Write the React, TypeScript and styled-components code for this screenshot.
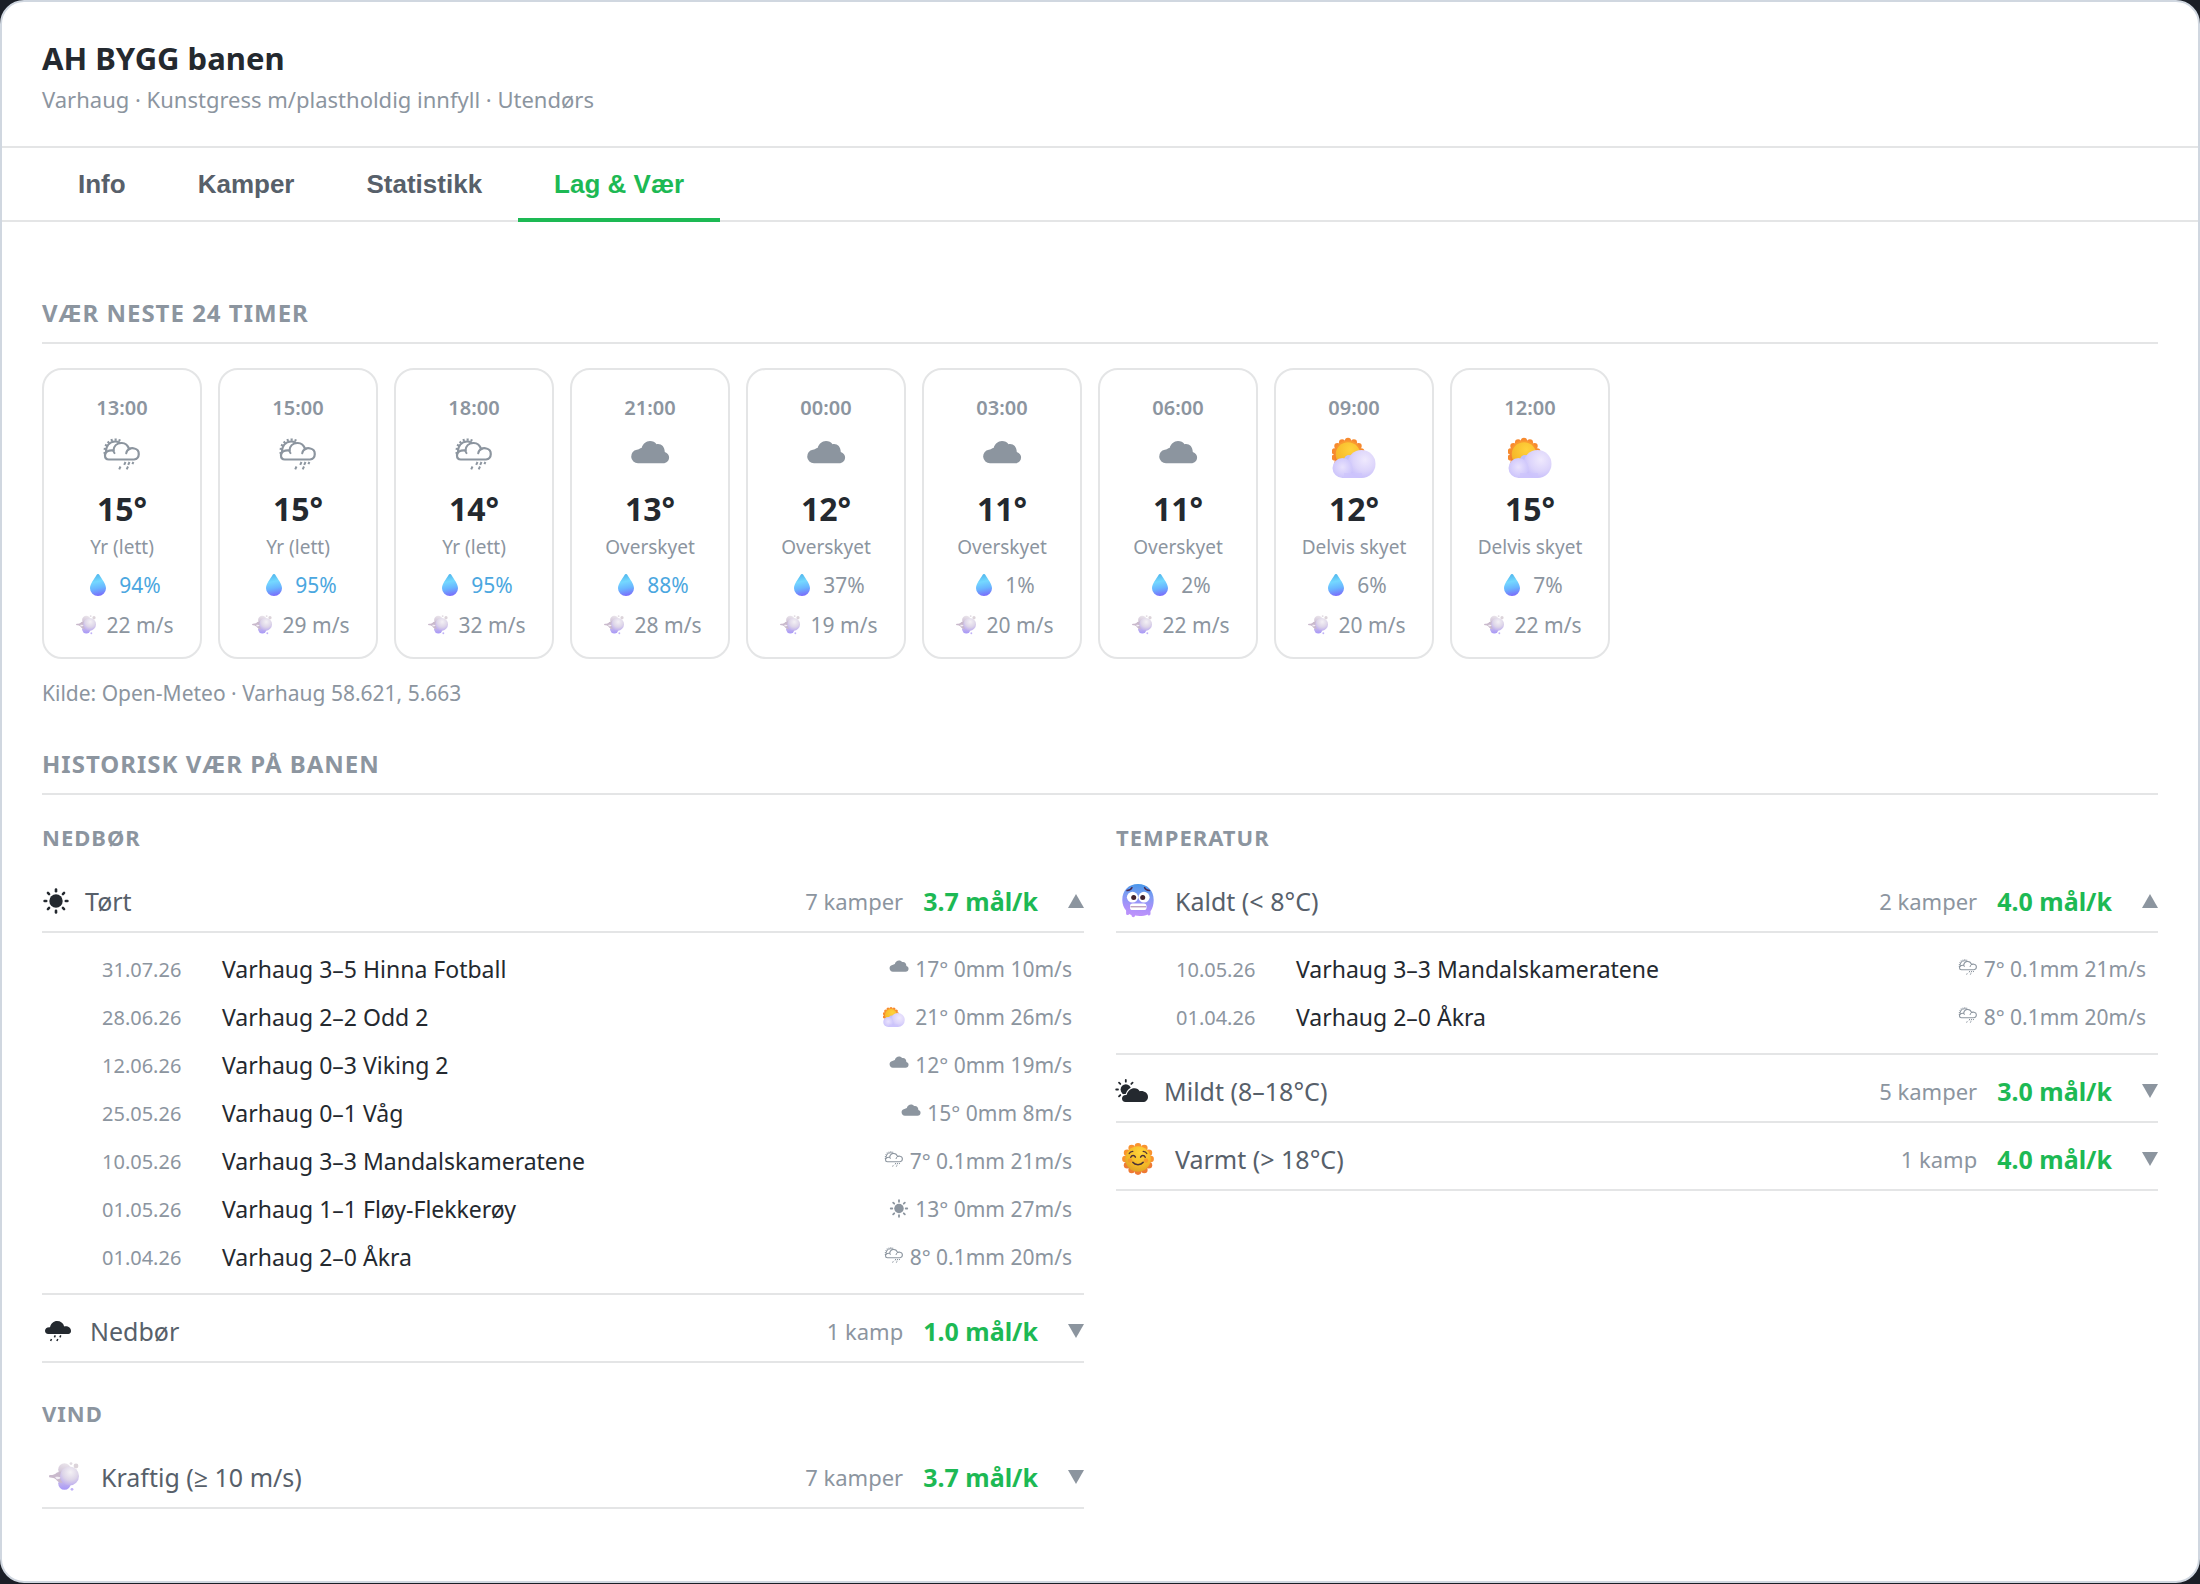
import React, { useState } from "react";
import styled, { createGlobalStyle } from "styled-components";

const color = {
  page: "#1b1f27",
  surface: "#ffffff",
  frame: "#d0d7e0",
  line: "#e4e5e6",
  text: "#24292f",
  body: "#57606a",
  muted: "#8c959f",
  accent: "#1db954",
  rain: "#4ba7e0",
};

const GlobalStyle = createGlobalStyle`
  *, *::before, *::after { box-sizing: border-box; }
  body {
    margin: 0;
    background: ${color.page};
    color: ${color.text};
    font-family: "Noto Sans", "Open Sans", sans-serif;
  }
  h1, h2, h3, p, ul { margin: 0; padding: 0; }
  ul { list-style: none; }
`;

const Card = styled.div`
  background: ${color.surface};
  border: 2px solid ${color.frame};
  border-radius: 24px;
  overflow: hidden;
`;

const Header = styled.header`
  padding: 34px 40px 31px;
  border-bottom: 2px solid ${color.line};
`;

const Title = styled.h1`
  font-size: 31px;
  line-height: 44px;
  font-weight: 700;
`;

const Subtitle = styled.p`
  && { margin-top: 3px; }
  font-size: 22px;
  line-height: 32px;
  color: ${color.muted};
`;

const Tabs = styled.nav`
  display: flex;
  padding: 0 40px;
  border-bottom: 2px solid ${color.line};
`;

const Tab = styled.button<{ $active: boolean }>`
  height: 74px;
  margin-bottom: -2px;
  padding: 2px 36px 0;
  border: 0;
  border-bottom: 4px solid ${(p) => (p.$active ? color.accent : "transparent")};
  background: none;
  color: ${(p) => (p.$active ? color.accent : color.body)};
  font-family: "Liberation Sans", Arial, sans-serif;
  font-size: 26px;
  font-weight: 600;
  cursor: pointer;
`;

const Main = styled.main`
  padding: 74px 40px 72px;
`;

const SectionTitle = styled.h2`
  padding-bottom: 12px;
  border-bottom: 2px solid ${color.line};
  font-size: 24px;
  line-height: 34px;
  font-weight: 700;
  letter-spacing: 1px;
  color: ${color.muted};
`;

const History = styled.section`
  margin-top: 38px;
`;

const HourList = styled.ul`
  display: flex;
  flex-wrap: wrap;
  gap: 16px;
  && { margin-top: 24px; }
`;

const HourCard = styled.li`
  display: flex;
  flex-direction: column;
  align-items: center;
  width: 160px;
  padding: 22px 0 16px;
  border: 2px solid ${color.line};
  border-radius: 20px;
  color: ${color.muted};
`;

const Time = styled.time`
  font-size: 20px;
  line-height: 32px;
  font-weight: 600;
  margin-bottom: 12px;
`;

const Temp = styled.div`
  margin-top: 9px;
  font-size: 32px;
  line-height: 40px;
  font-weight: 700;
  color: ${color.text};
`;

const Condition = styled.div`
  margin-top: 5px;
  font-size: 19px;
  line-height: 27px;
`;

const Reading = styled.div<{ $wet?: boolean }>`
  display: flex;
  align-items: center;
  gap: 6px;
  margin-top: 8px;
  font-size: 21px;
  line-height: 32px;
  color: ${(p) => (p.$wet ? color.rain : color.muted)};
`;

const ReadingIcon = styled.span`
  display: flex;
  justify-content: center;
  width: 30px;
`;

const Source = styled.p`
  && { margin-top: 18px; }
  font-size: 21px;
  line-height: 32px;
  color: ${color.muted};
`;

const Columns = styled.div`
  display: grid;
  grid-template-columns: 1fr 1fr;
  gap: 32px;
  align-items: start;
  padding-top: 26px;
`;

const GroupStack = styled.div`
  display: flex;
  flex-direction: column;
  gap: 34px;
`;

const GroupTitle = styled.h3`
  && { margin-bottom: 12px; }
  font-size: 22px;
  line-height: 32px;
  font-weight: 700;
  letter-spacing: 1px;
  color: ${color.muted};
`;

const GroupRow = styled.button`
  display: flex;
  align-items: center;
  width: 100%;
  padding: 18px 0 12px;
  border: 0;
  border-bottom: 2px solid ${color.line};
  background: none;
  color: ${color.text};
  font-family: inherit;
  font-size: 25px;
  line-height: 36px;
  text-align: left;
  cursor: pointer;
`;

const GroupIcon = styled.span<{ $width: number }>`
  display: flex;
  align-items: center;
  justify-content: center;
  width: ${(p) => p.$width}px;
  height: 36px;
  margin-right: 16px;
`;

const GroupLabel = styled.span`
  flex: 1;
  color: ${color.body};
`;

const GroupCount = styled.span`
  margin-right: 20px;
  font-size: 22px;
  color: ${color.muted};
`;

const GroupRate = styled.span`
  margin-right: 30px;
  font-size: 25px;
  font-weight: 700;
  color: ${color.accent};
`;

const MatchList = styled.ul`
  && { padding: 12px 12px 12px 60px; }
  border-bottom: 2px solid ${color.line};
`;

const Match = styled.li`
  display: grid;
  grid-template-columns: 120px 1fr auto;
  align-items: center;
  height: 48px;
  font-size: 23px;
`;

const MatchDate = styled.time`
  font-size: 20px;
  color: ${color.muted};
`;

const MatchWeather = styled.span<{ $wide: boolean }>`
  display: flex;
  align-items: center;
  gap: ${(p) => (p.$wide ? 10 : 5)}px;
  font-size: 21px;
  color: ${color.muted};
`;

const Defs = styled.svg`
  display: block;
  width: 0;
  height: 0;
  position: absolute;
`;

type Sky = "showers" | "cloud" | "partly" | "sun";

const ring = (n: number, cx: number, cy: number, r: number) =>
  Array.from({ length: n }, (_, i) => {
    const a = (i / n) * Math.PI * 2 - Math.PI / 2;
    return { x: cx + Math.cos(a) * r, y: cy + Math.sin(a) * r, deg: (a * 180) / Math.PI };
  });

const Gradients = () => (
  <Defs aria-hidden="true">
    <defs>
      <linearGradient id="rayFill" x1="0" y1="0" x2="0" y2="1">
        <stop offset="0" stopColor="#fb9d2f" />
        <stop offset="1" stopColor="#ee6f2d" />
      </linearGradient>
      <radialGradient id="sunFill" cx="0.6" cy="0.3" r="0.8">
        <stop offset="0" stopColor="#ffd23c" />
        <stop offset="0.7" stopColor="#f7bb2b" />
        <stop offset="1" stopColor="#eea52a" />
      </radialGradient>
      <radialGradient id="faceSun" cx="0.6" cy="0.25" r="0.85">
        <stop offset="0" stopColor="#ffd43a" />
        <stop offset="0.6" stopColor="#f3b927" />
        <stop offset="1" stopColor="#d99a26" />
      </radialGradient>
      <radialGradient id="puffBig" cx="0.62" cy="0.35" r="0.75">
        <stop offset="0" stopColor="#efe9fd" />
        <stop offset="0.55" stopColor="#dcd4fb" />
        <stop offset="1" stopColor="#c1b8fa" />
      </radialGradient>
      <radialGradient id="puffSmall" cx="0.5" cy="0.45" r="0.6">
        <stop offset="0" stopColor="#e9e2fd" />
        <stop offset="1" stopColor="#c9c1fb" />
      </radialGradient>
      <linearGradient id="dropFill" x1="0.35" y1="0" x2="0.5" y2="1">
        <stop offset="0" stopColor="#4fb4ec" />
        <stop offset="0.35" stopColor="#74d8ff" />
        <stop offset="0.65" stopColor="#69b6ff" />
        <stop offset="1" stopColor="#7a6bfb" />
      </linearGradient>
      <linearGradient id="windTop" x1="0.7" y1="0" x2="0.4" y2="1">
        <stop offset="0" stopColor="#ebe6ec" />
        <stop offset="1" stopColor="#cbbcd2" />
      </linearGradient>
      <radialGradient id="windBody" cx="0.55" cy="0.3" r="0.75">
        <stop offset="0" stopColor="#f4f1f5" />
        <stop offset="0.55" stopColor="#ddd5e8" />
        <stop offset="1" stopColor="#b9a8f0" />
      </radialGradient>
      <linearGradient id="windLow" x1="0.5" y1="0" x2="0.5" y2="1">
        <stop offset="0" stopColor="#d3c7e4" />
        <stop offset="1" stopColor="#a797f8" />
      </linearGradient>
      <linearGradient id="coldFill" x1="0.55" y1="0" x2="0.45" y2="1">
        <stop offset="0" stopColor="#4796ea" />
        <stop offset="0.35" stopColor="#7f9cf3" />
        <stop offset="0.7" stopColor="#aa90fa" />
        <stop offset="1" stopColor="#c193fb" />
      </linearGradient>
    </defs>
  </Defs>
);

const SkyIcon = ({ sky, size }: { sky: Sky; size: number }) => (
  <svg width={size} height={size} viewBox="0 0 44 44" fill="currentColor" aria-hidden="true">
    {sky === "cloud" && (
      <path d="M10 27.3a6.8 6.8 0 0 1-1.2-13.5c1.8-.3 3-1.5 4.8-1.8C14.8 8 18 5 22 5c2.8 0 5 1.1 6.5 3.2 4.7-.8 8 2 8.3 7.8 2.8 1.2 4.300 3 4.300 5.300 0 3.600-2.400 6-6.100 6z" />
    )}
    {sky === "showers" && (
      <g fill="none" stroke="currentColor">
        <path strokeWidth="2.200" strokeLinejoin="round" d="M8.800 23.500H34a5.600 5.600 0 0 0 .4-11c-2-.6-4-.2-5.400.4C27.600 8.600 24.600 6.800 21.200 7c-4.600.2-7.500 3.400-7.700 7.600-5-.6-8.500 1-8.500 5 0 2.500 1.300 3.900 3.800 3.900z" />
        <path strokeWidth="2" strokeLinecap="round" d="M30 12.700c-2.200.7-3.500 2.200-3.800 4.600M6 16.500C5.600 10 9.500 5.600 15 5.500c1.700 0 3.200.4 4.500 1.200M13.500 14.500c.1 1.100.4 1.900 1 2.600" />
        <path strokeWidth="2.400" strokeDasharray="2 1.900" d="M4.900 18C3.600 9.500 8.600 3.800 15.200 3.600c2.600 0 5 .8 6.800 2.200" />
        <path strokeWidth="2" d="M25.500 26l-1.300 2.800M29.500 26l-1.300 2.800M33.400 26l-1 2.200M20.500 30.500l-1.300 2.800M28 30.500l-1.300 2.800" />
      </g>
    )}
    {sky === "sun" && (
      <g stroke="currentColor" strokeWidth="3.600" strokeLinecap="round">
        <circle cx="22" cy="21" r="9.500" stroke="none" />
        {ring(8, 22, 21, 1).map((p, i) => (
          <line key={i} x1="13.500" x2="16.500" y1="0" y2="0" transform={`translate(22 21) rotate(${p.deg})`} />
        ))}
      </g>
    )}
    {sky === "partly" && (
      <g>
        <g fill="url(#rayFill)">
          {ring(14, 16, 18.5, 13.6).map((p, i) => (
            <circle key={i} cx={p.x} cy={p.y} r="3.100" fill="#f78a2e" />
          ))}
          <circle cx="16" cy="18.500" r="14" />
        </g>
        <circle cx="16" cy="18.500" r="12.300" fill="url(#sunFill)" />
        <circle cx="17" cy="24" r="5" fill="#bfc0fb" />
        <path d="M10 31h20v11H10z" fill="#cbc4fb" />
        <circle cx="29.500" cy="28" r="14" fill="url(#puffBig)" />
        <circle cx="10.500" cy="32" r="10" fill="url(#puffSmall)" />
        <path d="M12 37h18v5H12z" fill="#cdc5fc" opacity="0.7" />
      </g>
    )}
  </svg>
);

const DropIcon = () => (
  <svg width="16" height="22" viewBox="0 0 16 22" aria-hidden="true">
    <path d="M8 0c.7 0 1.200.5 1.600 1.200C11.800 5 16 10 16 14.300A8 7.700 0 0 1 0 14.300C0 10 4.200 5 6.400 1.200 6.800.5 7.300 0 8 0z" fill="url(#dropFill)" />
  </svg>
);

const WindIcon = ({ size }: { size: number }) => (
  <svg width={size} height={size} viewBox="0 0 30 30" aria-hidden="true">
    <circle cx="15.500" cy="7.500" r="6.300" fill="url(#windTop)" />
    <circle cx="15.500" cy="21.500" r="6.300" fill="url(#windLow)" />
    <path d="M0 14.300c0-.8.6-1.200 1.500-1.200 2.500 0 4.500-.4 6.500-2.600l6-1.500v11.500c-3 .5-5.500-.5-7-3-1.700-1.600-3.500-1.900-5.500-2-.9 0-1.500-.4-1.500-1.200z" fill="#c9b9cc" />
    <path d="M6 15c2.500-.5 4-.5 6 .5-1 1.500-3 2-4.500 1.500z" fill="#f2eef4" />
    <circle cx="20.500" cy="14" r="9.500" fill="url(#windBody)" />
    <circle cx="22" cy="1.600" r="1.400" fill="#e2dbe2" />
    <circle cx="27" cy="4" r="2.400" fill="#dcd4da" />
    <circle cx="23" cy="27.300" r="1.400" fill="#c0b2f7" />
  </svg>
);

const ColdIcon = () => (
  <svg width="32" height="34" viewBox="0 0 32 34" aria-hidden="true">
    <path d="M16 0c9.500 0 15.700 6.500 15.700 16 0 4.500-1.100 8.500-3.200 11.200V30c0 1.800-2.600 1.800-2.800.4-3.500 1.600-8.700 1.800-12.700 1.100-.2 2.400-3.300 2.200-3.600-.6-.9-.3-1.600-.6-2.300-1-.3 1.700-3 1.500-3-.4v-3C1.600 23.800.3 20 .3 16 .3 6.500 6.500 0 16 0z" fill="url(#coldFill)" />
    <ellipse cx="10.500" cy="13.200" rx="5.600" ry="5.400" fill="#fff" />
    <ellipse cx="22" cy="13.200" rx="5.600" ry="5.400" fill="#fff" />
    <circle cx="11.700" cy="13.500" r="2.500" fill="#43242f" />
    <circle cx="20.700" cy="13.500" r="2.500" fill="#43242f" />
    <path d="M5 6.600c2.400-.1 4.300-1.200 5-3M27.500 6.600c-2.400-.1-4.300-1.200-5-3" fill="none" stroke="#4a2b52" strokeWidth="1.500" strokeLinecap="round" />
    <rect x="8" y="19.500" width="16.500" height="6.500" rx="2.600" fill="#fff" />
    <path d="M8.500 22.800h15.500" stroke="#9a6c9c" strokeWidth="0.900" />
  </svg>
);

const WarmIcon = () => (
  <svg width="32" height="32" viewBox="0 0 32 32" aria-hidden="true">
    {ring(12, 16, 16, 12.6).map((p, i) => (
      <circle key={i} cx={p.x} cy={p.y} r="3.300" fill={p.y > 16 ? "#ef7a33" : "#f9932f"} />
    ))}
    <circle cx="16" cy="16" r="12.800" fill="url(#faceSun)" />
    <circle cx="8" cy="17.500" r="2.200" fill="#f5902d" opacity="0.7" />
    <circle cx="24" cy="17.500" r="2.200" fill="#f5902d" opacity="0.7" />
    <g fill="none" stroke="#4b3038" strokeWidth="1.500" strokeLinecap="round">
      <path d="M8.800 14.200c1-2.200 3.600-2.200 4.600-.1M18.600 14.100c1-2.100 3.600-2.100 4.600.1" />
      <path d="M10.800 19.300c2.300 3.100 8.100 3.100 10.400 0" />
      <path d="M7.200 10.600c.7-1.500 2-2.200 3.600-2.200M24.800 10.600c-.7-1.500-2-2.200-3.600-2.200" strokeWidth="1.200" />
    </g>
  </svg>
);

const DryIcon = () => (
  <svg width="26" height="26" viewBox="0 0 26 26" aria-hidden="true">
    <circle cx="13" cy="13" r="6.700" fill="currentColor" />
    {ring(8, 13, 13, 1).map((p, i) => (
      <line key={i} x1="9.800" x2="11.400" y1="0" y2="0" stroke="currentColor" strokeWidth="2.600" strokeLinecap="round" transform={`translate(13 13) rotate(${p.deg})`} />
    ))}
  </svg>
);

const WetIcon = () => (
  <svg width="26" height="21" viewBox="0 0 26 21" aria-hidden="true">
    <path d="M3.200 13C1.200 13 0 11.600 0 9.800c0-2.400 2-3.900 5-3.600C6 2.300 8.700 0 12 0c3.500 0 6.300 1.900 7.200 5.400 3.800-.6 6.800 1.300 6.800 4.700 0 1.700-1 2.900-2.700 2.900z" fill="currentColor" />
    <path d="M10.300 14.400l-.9 2M15.800 14.400l-.9 2M6.500 18l-.9 2M12.800 18l-.9 2" stroke="currentColor" strokeWidth="1.500" />
  </svg>
);

const MildIcon = () => (
  <svg width="32" height="22" viewBox="0 0 32 22" overflow="visible" aria-hidden="true">
    <circle cx="9.800" cy="9.500" r="5.200" fill="currentColor" />
    {ring(8, 9.8, 9.5, 1).map((p, i) => (
      <line key={i} x1="7.800" x2="9.600" y1="0" y2="0" stroke="currentColor" strokeWidth="1.800" strokeLinecap="round" transform={`translate(9.800 9.500) rotate(${p.deg})`} />
    ))}
    <path d="M9.500 22C7.300 22 6 20.500 6 18.500c0-2.200 1.500-3.800 4.500-3.600C12 10.500 15 8 18.700 8.200c2.200.1 3.900 1.200 5 3 4.400-.6 8.300 1.700 8.300 5.800 0 2.900-2.100 5-5 5z" fill="currentColor" stroke="#fff" strokeWidth="2.400" paintOrder="stroke" />
  </svg>
);

const Arrow = ({ up }: { up: boolean }) => (
  <svg width="16" height="14" viewBox="0 0 16 14" fill={color.muted} aria-hidden="true">
    <path d={up ? "M8 0l8 14H0z" : "M8 14L0 0h16z"} />
  </svg>
);

interface Hour {
  time: string;
  sky: Sky;
  temp: number;
  text: string;
  rain: number;
  wind: number;
}

const hours: Hour[] = [
  { time: "13:00", sky: "showers", temp: 15, text: "Yr (lett)", rain: 94, wind: 22 },
  { time: "15:00", sky: "showers", temp: 15, text: "Yr (lett)", rain: 95, wind: 29 },
  { time: "18:00", sky: "showers", temp: 14, text: "Yr (lett)", rain: 95, wind: 32 },
  { time: "21:00", sky: "cloud", temp: 13, text: "Overskyet", rain: 88, wind: 28 },
  { time: "00:00", sky: "cloud", temp: 12, text: "Overskyet", rain: 37, wind: 19 },
  { time: "03:00", sky: "cloud", temp: 11, text: "Overskyet", rain: 1, wind: 20 },
  { time: "06:00", sky: "cloud", temp: 11, text: "Overskyet", rain: 2, wind: 22 },
  { time: "09:00", sky: "partly", temp: 12, text: "Delvis skyet", rain: 6, wind: 20 },
  { time: "12:00", sky: "partly", temp: 15, text: "Delvis skyet", rain: 7, wind: 22 },
];

interface MatchData {
  date: string;
  name: string;
  sky: Sky;
  weather: string;
}

const mandal: MatchData = { date: "10.05.26", name: "Varhaug 3–3 Mandalskameratene", sky: "showers", weather: "7° 0.1mm 21m/s" };
const akra: MatchData = { date: "01.04.26", name: "Varhaug 2–0 Åkra", sky: "showers", weather: "8° 0.1mm 20m/s" };

const dryMatches: MatchData[] = [
  { date: "31.07.26", name: "Varhaug 3–5 Hinna Fotball", sky: "cloud", weather: "17° 0mm 10m/s" },
  { date: "28.06.26", name: "Varhaug 2–2 Odd 2", sky: "partly", weather: "21° 0mm 26m/s" },
  { date: "12.06.26", name: "Varhaug 0–3 Viking 2", sky: "cloud", weather: "12° 0mm 19m/s" },
  { date: "25.05.26", name: "Varhaug 0–1 Våg", sky: "cloud", weather: "15° 0mm 8m/s" },
  mandal,
  { date: "01.05.26", name: "Varhaug 1–1 Fløy-Flekkerøy", sky: "sun", weather: "13° 0mm 27m/s" },
  akra,
];

interface GroupProps {
  icon: React.ReactNode;
  iconWidth: number;
  label: string;
  count: string;
  rate: string;
  matches?: MatchData[];
}

const Group = ({ icon, iconWidth, label, count, rate, matches = [] }: GroupProps) => {
  const [open, setOpen] = useState(matches.length > 0);
  return (
    <div>
      <GroupRow type="button" aria-expanded={open} onClick={() => setOpen(!open)}>
        <GroupIcon $width={iconWidth}>{icon}</GroupIcon>
        <GroupLabel>{label}</GroupLabel>
        <GroupCount>{count}</GroupCount>
        <GroupRate>{rate} mål/k</GroupRate>
        <Arrow up={open} />
      </GroupRow>
      {open && matches.length > 0 && (
        <MatchList>
          {matches.map((m) => (
            <Match key={m.date}>
              <MatchDate>{m.date}</MatchDate>
              <span>{m.name}</span>
              <MatchWeather $wide={m.sky === "partly"}>
                <SkyIcon sky={m.sky} size={22} />
                {m.weather}
              </MatchWeather>
            </Match>
          ))}
        </MatchList>
      )}
    </div>
  );
};

const tabs = ["Info", "Kamper", "Statistikk", "Lag & Vær"];

export default function App() {
  const [active, setActive] = useState("Lag & Vær");
  return (
    <>
      <GlobalStyle />
      <Gradients />
      <Card>
        <Header>
          <Title>AH BYGG banen</Title>
          <Subtitle>Varhaug · Kunstgress m/plastholdig innfyll · Utendørs</Subtitle>
        </Header>
        <Tabs>
          {tabs.map((t) => (
            <Tab key={t} type="button" $active={t === active} onClick={() => setActive(t)}>
              {t}
            </Tab>
          ))}
        </Tabs>
        <Main>
          <section>
            <SectionTitle>VÆR NESTE 24 TIMER</SectionTitle>
            <HourList>
              {hours.map((h) => (
                <HourCard key={h.time}>
                  <Time>{h.time}</Time>
                  <SkyIcon sky={h.sky} size={44} />
                  <Temp>{h.temp}°</Temp>
                  <Condition>{h.text}</Condition>
                  <Reading $wet={h.rain > 50}>
                    <ReadingIcon><DropIcon /></ReadingIcon>
                    {h.rain}%
                  </Reading>
                  <Reading>
                    <ReadingIcon><WindIcon size={20} /></ReadingIcon>
                    {h.wind} m/s
                  </Reading>
                </HourCard>
              ))}
            </HourList>
            <Source>Kilde: Open-Meteo · Varhaug 58.621, 5.663</Source>
          </section>
          <History>
            <SectionTitle>HISTORISK VÆR PÅ BANEN</SectionTitle>
            <Columns>
              <GroupStack>
                <section>
                  <GroupTitle>NEDBØR</GroupTitle>
                  <Group icon={<DryIcon />} iconWidth={27} label="Tørt" count="7 kamper" rate="3.7" matches={dryMatches} />
                  <Group icon={<WetIcon />} iconWidth={32} label="Nedbør" count="1 kamp" rate="1.0" />
                </section>
                <section>
                  <GroupTitle>VIND</GroupTitle>
                  <Group icon={<WindIcon size={30} />} iconWidth={43} label="Kraftig (≥ 10 m/s)" count="7 kamper" rate="3.7" />
                </section>
              </GroupStack>
              <section>
                <GroupTitle>TEMPERATUR</GroupTitle>
                <Group icon={<ColdIcon />} iconWidth={43} label="Kaldt (< 8°C)" count="2 kamper" rate="4.0" matches={[mandal, akra]} />
                <Group icon={<MildIcon />} iconWidth={32} label="Mildt (8–18°C)" count="5 kamper" rate="3.0" />
                <Group icon={<WarmIcon />} iconWidth={43} label="Varmt (> 18°C)" count="1 kamp" rate="4.0" />
              </section>
            </Columns>
          </History>
        </Main>
      </Card>
    </>
  );
}
